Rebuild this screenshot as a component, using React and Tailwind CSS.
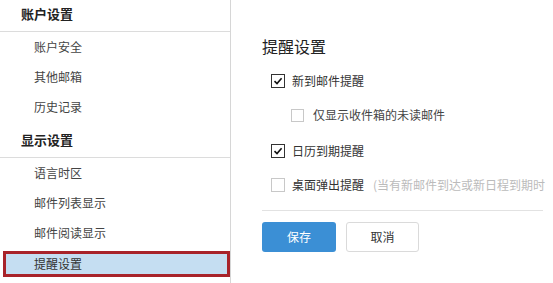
import React from 'react'

const font = { fontFamily: '"Noto Sans CJK SC", "Noto Sans", sans-serif' }

const SideHeader = ({ children, className = '' }) => (
  <div className={`h-[35px] flex items-center pl-[21px] border-b border-[#dcdcdc] text-[13px] font-bold text-[#222] ${className}`}>
    {children}
  </div>
)

const SideItem = ({ children, active }) =>
  active ? (
    <div className="h-[30px] flex items-center">
      <div className="ml-[3px] mt-[2px] w-full h-[26px] flex items-center pl-[28px] bg-[#c5def2] border-[3px] border-[#a8232a] text-[12px] text-[#333]">
        {children}
      </div>
    </div>
  ) : (
    <div className="h-[30px] flex items-center pl-[34px] text-[12px] text-[#444]">{children}</div>
  )

const Check = ({ checked, size = 14 }) => (
  <span
    className={`shrink-0 inline-flex items-center justify-center bg-white border ${checked ? 'border-[#333]' : 'border-[#c8c8c8]'}`}
    style={{ width: size, height: size }}
  >
    {checked && (
      <svg width="10" height="10" viewBox="0 0 10 10">
        <path d="M1.5 5.2 L4 7.6 L8.6 2.2" fill="none" stroke="#111" strokeWidth="1.6" />
      </svg>
    )}
  </span>
)

export default function App() {
  return (
    <div className="w-[553px] h-[283px] flex overflow-hidden bg-white" style={font}>
      <div className="w-[231px] shrink-0 border-r border-[#d6d6d6] -mt-[3px]">
        <SideHeader>账户设置</SideHeader>
        <SideItem>账户安全</SideItem>
        <SideItem>其他邮箱</SideItem>
        <SideItem>历史记录</SideItem>
        <SideHeader className="mt-[1px]">显示设置</SideHeader>
        <SideItem>语言时区</SideItem>
        <SideItem>邮件列表显示</SideItem>
        <SideItem>邮件阅读显示</SideItem>
        <SideItem active>提醒设置</SideItem>
      </div>
      <div className="flex-1 min-w-0 pl-[31px] pt-[35px]">
        <h2 className="text-[16px] leading-[22px] text-[#222]">提醒设置</h2>
        <div className="mt-[14px] flex flex-col gap-[14px] text-[12px] text-[#333]">
          <label className="h-[20px] flex items-center gap-[7px] pl-[9px]">
            <Check checked />
            <span>新到邮件提醒</span>
          </label>
          <label className="h-[20px] flex items-center gap-[9px] pl-[29px] text-[#444]">
            <Check size={13} />
            <span>仅显示收件箱的未读邮件</span>
          </label>
          <label className="h-[20px] flex items-center gap-[7px] pl-[9px] mt-[2px]">
            <Check checked />
            <span>日历到期提醒</span>
          </label>
          <label className="h-[20px] flex items-center gap-[7px] pl-[9px] whitespace-nowrap">
            <Check />
            <span>桌面弹出提醒</span>
            <span className="text-[#bbb] ml-[2px]">(当有新邮件到达或新日程到期时</span>
          </label>
        </div>
        <div className="mt-[15px] mr-[10px] border-t border-[#e2e2e2]" />
        <div className="mt-[11px] flex gap-[10px]">
          <button className="w-[74px] h-[30px] rounded-[3px] bg-[#3b8fd5] text-white text-[12px]">保存</button>
          <button className="w-[73px] h-[30px] rounded-[3px] bg-white border border-[#dadada] text-[#333] text-[12px]">取消</button>
        </div>
      </div>
    </div>
  )
}
